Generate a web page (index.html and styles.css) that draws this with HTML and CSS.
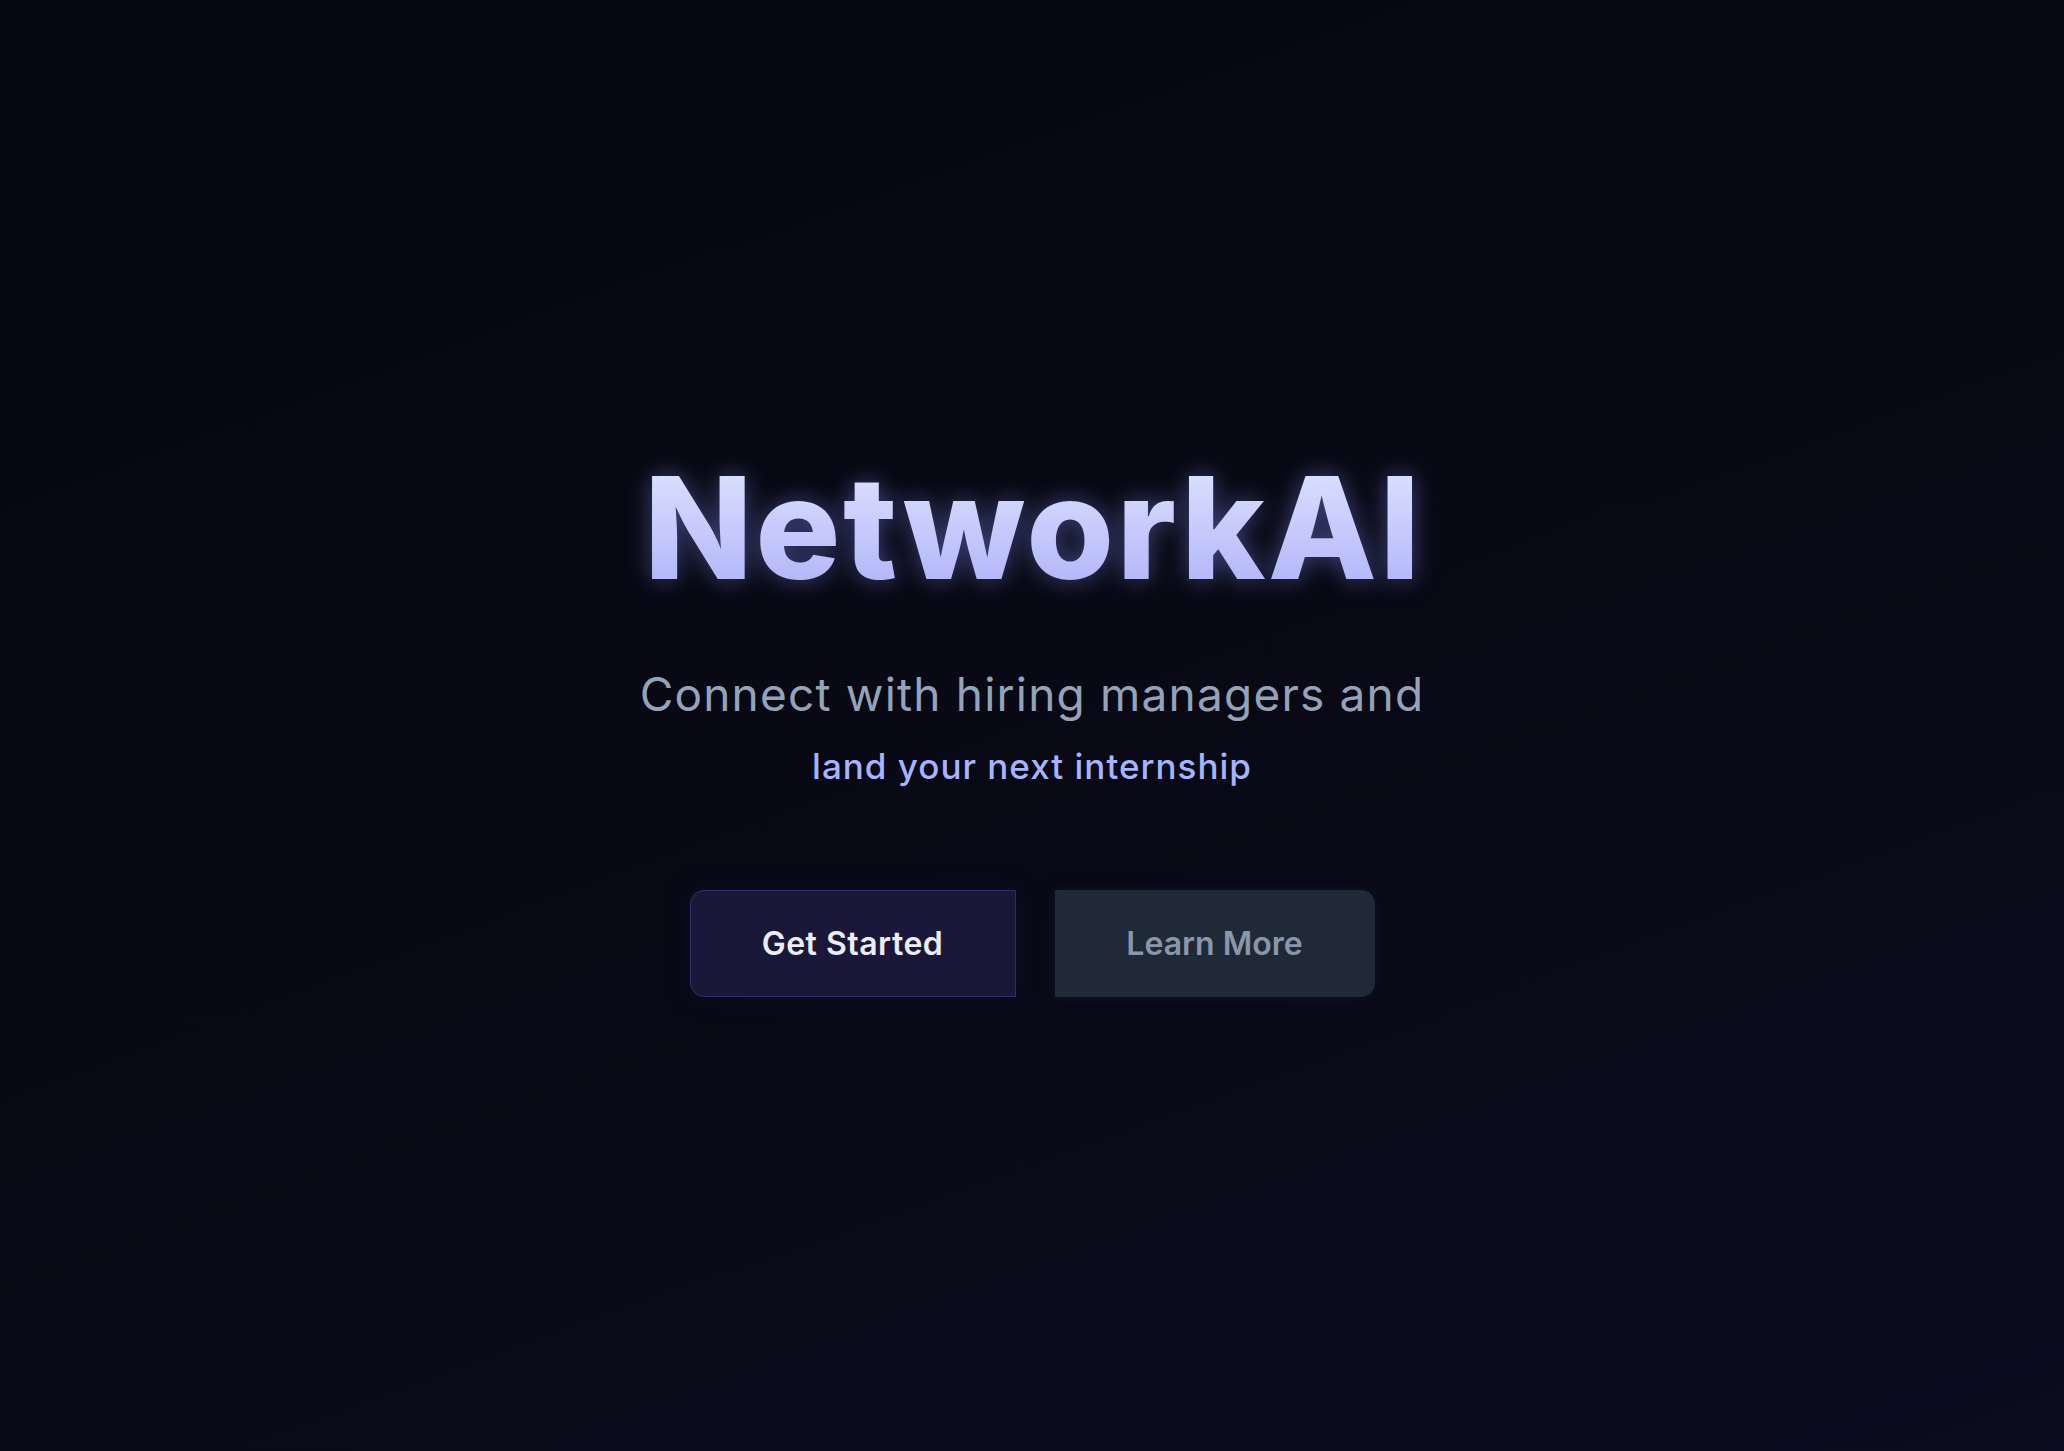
FILE: index.html
```html
<!DOCTYPE html>
<html lang="en">
<head>
<meta charset="utf-8">
<title>NetworkAI</title>
<link rel="stylesheet" href="styles.css">
</head>
<body>
<main class="hero">
  <h1 class="title">NetworkAI</h1>
  <p class="lead">Connect with hiring managers and</p>
  <p class="accent">land your next internship</p>
  <div class="actions">
    <a class="btn btn-primary" href="#">Get Started</a>
    <a class="btn btn-secondary" href="#">Learn More</a>
  </div>
</main>
</body>
</html>
```
FILE: styles.css
```css
html, body {
  margin: 0;
  padding: 0;
}
body {
  min-height: 100vh;
  background: linear-gradient(160deg, #05060f 0%, #080914 45%, #0c0b1f 100%);
  font-family: "Inter", "Open Sans", sans-serif;
  color: #e5e7eb;
}
.hero {
  min-height: 100vh;
  display: flex;
  flex-direction: column;
  align-items: center;
  padding-top: 452px;
  box-sizing: border-box;
}
.title {
  margin: 0;
  font-size: 142px;
  line-height: 150px;
  font-weight: 800;
  letter-spacing: 2.5px;
  text-indent: 2.5px;
  background: linear-gradient(180deg, #e0e7ff 0%, #c7cbfc 50%, #aeb0f7 100%);
  -webkit-background-clip: text;
  background-clip: text;
  color: transparent;
  filter: drop-shadow(0 0 12px rgba(129, 140, 248, 0.45));
}
.lead {
  margin: 64px 0 0;
  font-size: 46px;
  line-height: 56px;
  font-weight: 400;
  letter-spacing: 1.2px;
  color: #94a3b8;
}
.accent {
  margin: 22px 0 0;
  font-size: 35px;
  line-height: 44px;
  font-weight: 500;
  letter-spacing: 1px;
  color: #a5b4fc;
}
.actions {
  display: flex;
  gap: 39px;
  margin-top: 102px;
}
.btn {
  display: flex;
  align-items: center;
  justify-content: center;
  height: 107px;
  box-sizing: border-box;
  font-size: 32px;
  font-weight: 600;
  text-decoration: none;
}
.btn-primary {
  width: 326px;
  background: #1a1839;
  border: 1.5px solid #352d6a;
  border-radius: 14px 0 0 14px;
  color: #ececf7;
  letter-spacing: 0.5px;
  box-shadow: 0 0 20px rgba(20, 16, 50, 0.6);
}
.btn-secondary {
  width: 320px;
  background: #1f2937;
  border-radius: 0 14px 14px 0;
  color: #8a96aa;
  box-shadow: 0 0 14px rgba(20, 25, 40, 0.6);
}
```
